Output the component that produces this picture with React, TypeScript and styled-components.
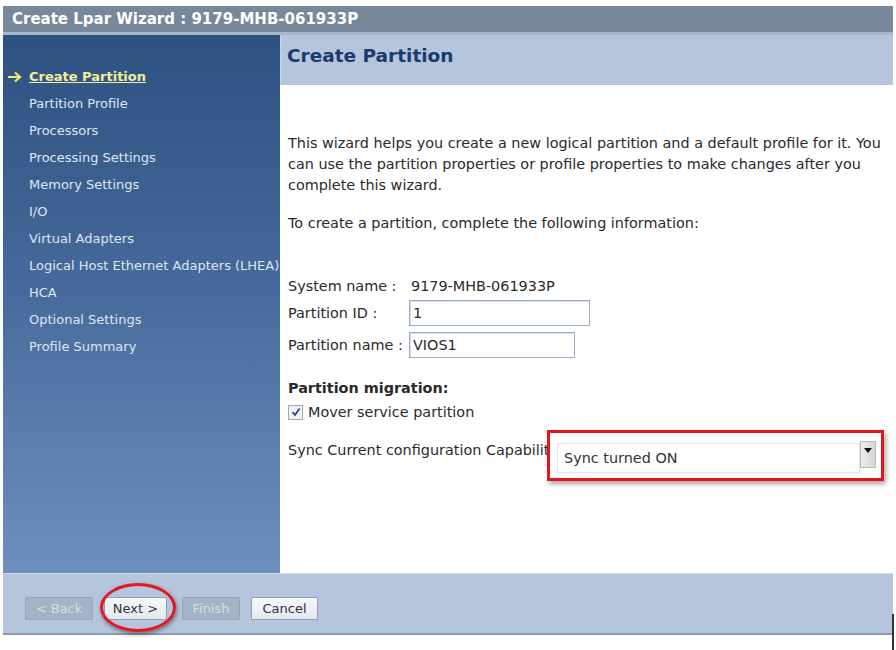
import React from "react";
import styled, { createGlobalStyle } from "styled-components";

const Global = createGlobalStyle`
  html, body { margin: 0; padding: 0; background: #ffffff; }
  body { font-family: Tahoma, "DejaVu Sans", Verdana, sans-serif; }
`;

const Page = styled.div`
  width: 896px;
  height: 650px;
  position: relative;
  background: #fff;
  padding: 6px 3px 0 3px;
  box-sizing: border-box;
`;

const Frame = styled.div`
  width: 890px;
  display: flex;
  flex-direction: column;
`;

const TitleBar = styled.div`
  height: 26px;
  background: #77889a;
  border-bottom: 3px solid #a9b6c8;
  color: #fff;
  font-weight: bold;
  font-size: 15px;
  display: flex;
  align-items: center;
  padding-left: 9px;
`;

const Body = styled.div`
  display: flex;
  height: 538px;
`;

const Sidebar = styled.nav`
  width: 277px;
  background: linear-gradient(180deg, #2d5280 0%, #44699a 45%, #6e8fbc 100%);
  padding-top: 28px;
  box-sizing: border-box;
  display: flex;
  flex-direction: column;
`;

const NavItem = styled.div<{ $active?: boolean }>`
  height: 27px;
  display: flex;
  align-items: center;
  padding-left: ${(p) => (p.$active ? "4px" : "26px")};
  font-size: 13px;
  color: ${(p) => (p.$active ? "#f3ee9a" : "#dfe6f1")};
  font-weight: ${(p) => (p.$active ? "bold" : "normal")};
  white-space: nowrap;
`;

const ActiveText = styled.span`
  text-decoration: underline;
`;

const Arrow = styled.span`
  width: 22px;
  display: inline-flex;
  align-items: center;
`;

const Main = styled.div`
  flex: 1;
  display: flex;
  flex-direction: column;
  background: #fff;
`;

const Header = styled.div`
  height: 50px;
  background: #b5c5de;
  display: flex;
  align-items: flex-start;
  padding: 10px 0 0 6px;
  box-sizing: border-box;
  border-left: 1px solid #c9d4e4;
`;

const HeaderTitle = styled.h1`
  margin: 0;
  font-size: 18.5px;
  font-weight: bold;
  color: #1d3a6c;
`;

const Content = styled.div`
  padding: 48px 8px 0 8px;
  color: #2a2a2a;
  font-size: 14.4px;
`;

const Para = styled.p`
  margin: 0 0 17px 0;
  line-height: 21px;
`;

const Fields = styled.div`
  margin-top: 44px;
  display: grid;
  grid-template-columns: 121px auto;
  row-gap: 6px;
  align-items: center;
`;

const Label = styled.span`
  white-space: nowrap;
`;

const Value = styled.span`
  padding-left: 2px;
`;

const TextInput = styled.div<{ $w: number }>`
  width: ${(p) => p.$w}px;
  height: 26px;
  border: 1px solid #9aaec8;
  box-shadow: inset 1px 1px 0 #d8dee8;
  background: #fff;
  display: flex;
  align-items: center;
  padding-left: 3px;
  box-sizing: border-box;
`;

const Section = styled.div`
  margin-top: 22px;
  font-weight: bold;
`;

const CheckRow = styled.div`
  display: flex;
  align-items: center;
  gap: 5px;
  margin-top: 8px;
`;

const Check = styled.span`
  width: 13px;
  height: 13px;
  border: 1px solid #a0a8b4;
  background: #f0f2f6;
  display: inline-flex;
  align-items: center;
  justify-content: center;
`;

const SyncRow = styled.div`
  display: flex;
  align-items: flex-start;
  margin-top: 20px;
`;

const SyncLabel = styled.span`
  padding-top: 2px;
  white-space: nowrap;
`;

const Highlight = styled.div`
  margin-left: -11px;
  margin-top: -10px;
  width: 337px;
  height: 51px;
  border: 3px solid #e3141b;
  box-sizing: border-box;
  box-shadow: 2px 3px 5px rgba(0, 0, 0, 0.35);
  display: flex;
  align-items: flex-start;
  padding: 10px 0 0 7px;
  background: #fff;
`;

const SelectBox = styled.div`
  width: 303px;
  height: 30px;
  border: 1px solid #e0e4ea;
  background: #fff;
  display: flex;
  align-items: center;
  padding-left: 6px;
  box-sizing: border-box;
  color: #333;
`;

const DropBtn = styled.div`
  width: 16px;
  height: 27px;
  margin-top: -2px;
  background: linear-gradient(90deg, #eeeeee, #d4d4d4);
  border: 1px solid #b8b8b8;
  box-sizing: border-box;
  display: flex;
  justify-content: center;
  padding-top: 6px;
`;

const Footer = styled.div`
  height: 62px;
  background: #b6c5de;
  display: flex;
  align-items: center;
  padding: 9px 0 0 22px;
  border-top: 1px solid #d6deea;
  border-bottom: 2px solid #8d9bb0;
  box-sizing: border-box;
`;

const Btn = styled.button<{ $disabled?: boolean; $w: number; $gap?: number }>`
  width: ${(p) => p.$w}px;
  margin-left: ${(p) => p.$gap ?? 0}px;
  height: 23px;
  font-family: Tahoma, "DejaVu Sans", Verdana, sans-serif;
  font-size: 13px;
  padding: 0;
  color: ${(p) => (p.$disabled ? "#d7dde6" : "#333")};
  background: ${(p) =>
    p.$disabled
      ? "#a4b3c6"
      : "linear-gradient(180deg, #f7f8fa 0%, #e3e8ef 100%)"};
  border: 1px solid ${(p) => (p.$disabled ? "#96a6ba" : "#8d9db3")};
  border-radius: 1px;
`;

const NextWrap = styled.div`
  position: relative;
  display: flex;
  margin-left: 11px;
`;

const Ellipse = styled.div`
  position: absolute;
  left: -4px;
  top: -14px;
  width: 76px;
  height: 49px;
  border: 3px solid #e01a20;
  border-radius: 50%;
  box-sizing: border-box;
  box-shadow: 1px 2px 4px rgba(0, 0, 0, 0.45);
  pointer-events: none;
`;

const EdgeLine = styled.div`
  position: absolute;
  right: 2px;
  top: 614px;
  width: 2px;
  height: 36px;
  background: #333;
`;

const navItems = [
  "Partition Profile",
  "Processors",
  "Processing Settings",
  "Memory Settings",
  "I/O",
  "Virtual Adapters",
  "Logical Host Ethernet Adapters (LHEA)",
  "HCA",
  "Optional Settings",
  "Profile Summary",
];

export default function App() {
  return (
    <>
      <Global />
      <Page>
        <Frame>
          <TitleBar>Create Lpar Wizard : 9179-MHB-061933P</TitleBar>
          <Body>
            <Sidebar>
              <NavItem $active>
                <Arrow>
                  <svg width="15" height="12" viewBox="0 0 15 12">
                    <path d="M1 6 H13 M8 1.5 L13 6 L8 10.5" fill="none" stroke="#f3e46a" strokeWidth="2.2" />
                  </svg>
                </Arrow>
                <ActiveText>Create Partition</ActiveText>
              </NavItem>
              {navItems.map((n) => (
                <NavItem key={n}>{n}</NavItem>
              ))}
            </Sidebar>
            <Main>
              <Header>
                <HeaderTitle>Create Partition</HeaderTitle>
              </Header>
              <Content>
                <Para>
                  This wizard helps you create a new logical partition and a default profile for it. You
                  can use the partition properties or profile properties to make changes after you
                  complete this wizard.
                </Para>
                <Para>To create a partition, complete the following information:</Para>
                <Fields>
                  <Label>System name :</Label>
                  <Value>9179-MHB-061933P</Value>
                  <Label>Partition ID :</Label>
                  <TextInput $w={181}>1</TextInput>
                  <Label>Partition name :</Label>
                  <TextInput $w={166}>VIOS1</TextInput>
                </Fields>
                <Section>Partition migration:</Section>
                <CheckRow>
                  <Check>
                    <svg width="10" height="10" viewBox="0 0 10 10">
                      <path d="M1.5 5 L4 8 L8.5 1.5" fill="none" stroke="#2a4a8a" strokeWidth="1.8" />
                    </svg>
                  </Check>
                  <span>Mover service partition</span>
                </CheckRow>
                <SyncRow>
                  <SyncLabel>Sync Current configuration Capability</SyncLabel>
                  <Highlight>
                    <SelectBox>Sync turned ON</SelectBox>
                    <DropBtn>
                      <svg width="8" height="6" viewBox="0 0 8 6">
                        <path d="M0 0 H8 L4 5 Z" fill="#111" />
                      </svg>
                    </DropBtn>
                  </Highlight>
                </SyncRow>
              </Content>
            </Main>
          </Body>
          <Footer>
            <Btn $disabled $w={68}>&lt; Back</Btn>
            <NextWrap>
              <Btn $w={63}>Next &gt;</Btn>
              <Ellipse />
            </NextWrap>
            <Btn $disabled $w={58} $gap={15}>Finish</Btn>
            <Btn $w={67} $gap={11}>Cancel</Btn>
          </Footer>
        </Frame>
        <EdgeLine />
      </Page>
    </>
  );
}
